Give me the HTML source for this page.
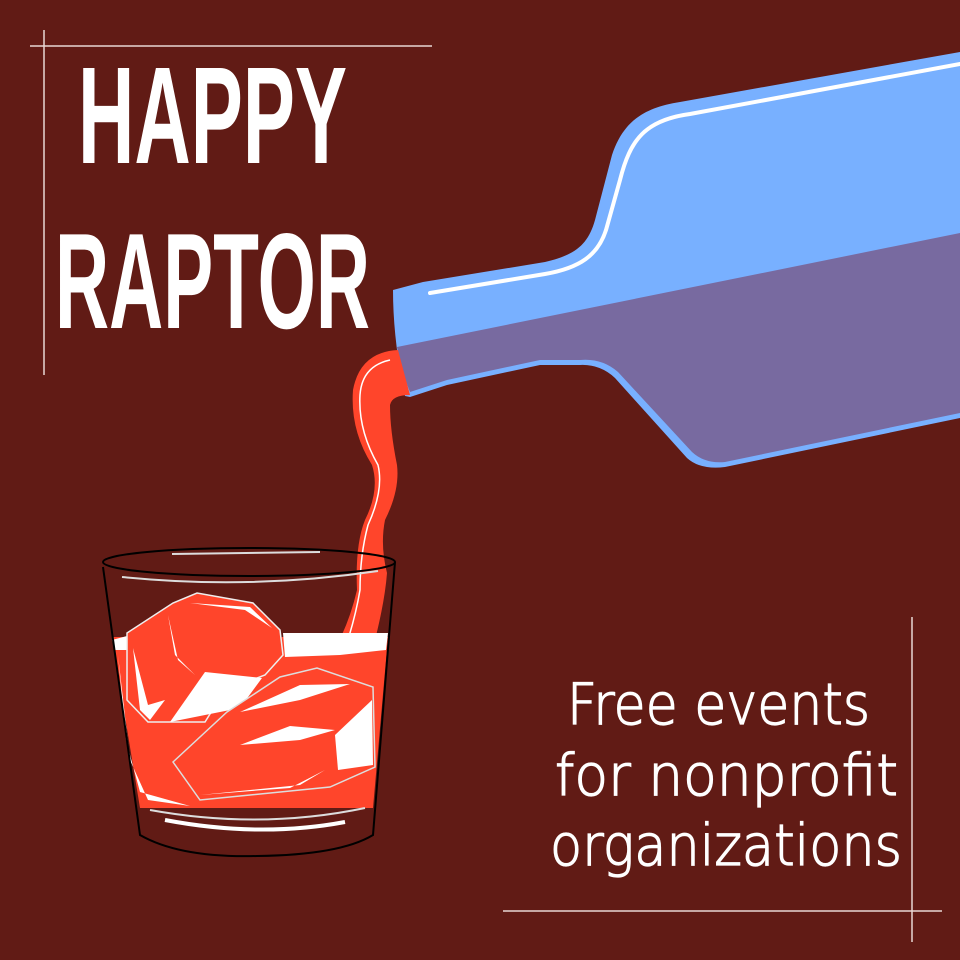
<!DOCTYPE html>
<html><head><meta charset="utf-8"><style>
html,body{margin:0;padding:0;background:#611b15;}
svg{display:block}
</style></head><body>
<svg width="960" height="960" viewBox="0 0 960 960" xmlns="http://www.w3.org/2000/svg">
<rect width="960" height="960" fill="#611b15"/>
<!-- frame lines -->
<line x1="30" y1="46" x2="432" y2="46" stroke="#e8d8d4" stroke-width="1.5"/>
<line x1="44" y1="30" x2="44" y2="375" stroke="#e8d8d4" stroke-width="1.5"/>
<line x1="503" y1="911" x2="942" y2="911" stroke="#e8d8d4" stroke-width="1.5"/>
<line x1="912" y1="617" x2="912" y2="942" stroke="#e8d8d4" stroke-width="1.5"/>
<!-- title -->
<text x="78" y="163" font-family="Liberation Sans, sans-serif" font-weight="bold" font-size="138" fill="#fff" textLength="269" lengthAdjust="spacingAndGlyphs">HAPPY</text>
<text x="55" y="328" font-family="Liberation Sans, sans-serif" font-weight="bold" font-size="136" fill="#fff" textLength="315" lengthAdjust="spacingAndGlyphs">RAPTOR</text>
<!-- subtitle -->
<g font-family="DejaVu Sans, Liberation Sans, sans-serif" font-weight="200" font-size="57" fill="#fff" stroke="#fff" stroke-width="1.3">
<text x="567" y="724" textLength="303" lengthAdjust="spacingAndGlyphs">Free events</text>
<text x="555" y="795" textLength="343" lengthAdjust="spacingAndGlyphs">for nonprofit</text>
<text x="550" y="865" textLength="352" lengthAdjust="spacingAndGlyphs">organizations</text>
</g>
<!-- bottle -->
<path d="M393 290 L423 282 L545 262 C575 255 588 245 595 220 L612 155 C622 125 640 108 680 102 L960 52 L960 418 L725 467 Q700 470 687 458 L615 378 Q600 364 580 365 L540 365 L447 385 L410 397 L405 396 Q393 340 393 290 Z" fill="#78b0ff"/>
<path d="M397 347 L960 233 L960 413 L725 462 Q705 464 692 452 L618 372 Q602 358 580 360 L540 360 L447 380 L410 392 Q401 370 397 347 Z" fill="#786aa0"/>
<path d="M430 293 L545 274 C580 268 598 255 606 230 L620 180 C630 140 645 120 690 114 L960 64" fill="none" stroke="#fff" stroke-width="4" stroke-linecap="round"/>
<!-- stream -->
<path d="M398 350 Q360 352 353 390 Q350 430 372 465 Q380 490 365 520 Q355 545 357 590 Q350 620 337 645 L375 640 Q385 600 387 573 Q380 545 385 520 Q400 490 397 465 Q390 430 390 405 Q392 395 410 395 Z" fill="#ff452b"/>
<path d="M390 360 Q362 366 360 395 Q358 430 378 465 Q384 490 368 525 Q360 555 360 590 Q355 620 343 655" fill="none" stroke="#fff" stroke-width="1.5"/>
<!-- glass liquid -->
<path d="M112 637 L388 637 L373 808 L140 808 Z" fill="#ff452b"/>
<path d="M283 633 L388 633 L386 650 L340 655 L285 657 Z" fill="#fff"/>
<path d="M112 640 L127 636 L127 650 L115 650 Z" fill="#fff"/>
<!-- upper cube -->
<path d="M127 633 L173 603 L197 593 L253 603 L280 630 L283 655 L265 675 L225 690 L205 722 L148 722 L127 700 Z" fill="#ff452b" stroke="#eee" stroke-width="1.5"/>
<path d="M170 722 L205 672 L262 678 L240 708 Z" fill="#fff"/>
<path d="M133 648 L140 710 L150 720 L165 700 L148 705 Z" fill="#fff"/>
<path d="M190 603 L250 607 L272 628 L245 610 Z" fill="#fff"/>
<path d="M168 615 L178 660 L195 675 L175 655 Z" fill="#fff"/>
<!-- lower cube -->
<path d="M173 762 L227 712 L280 677 L317 668 L373 687 L375 767 L330 787 L200 800 Z" fill="#ff452b" stroke="#ddd" stroke-width="1.5"/>
<path d="M335 735 L372 700 L373 765 L338 770 Z" fill="#fff"/>
<path d="M240 745 L290 726 L335 730 L300 740 Z" fill="#fff"/>
<path d="M240 712 L300 685 L350 684 L300 700 Z" fill="#fff"/>
<path d="M200 795 L300 785 L325 770 L290 788 Z" fill="#fff"/>
<path d="M118 655 L130 760 L148 800 L190 806 L140 792 L126 740 Z" fill="#fff"/>
<!-- glass -->
<ellipse cx="249" cy="562" rx="146" ry="14" fill="none" stroke="#000" stroke-width="2"/>
<path d="M103 567 L140 835 Q180 858 257 856 Q340 855 373 835 L395 562" fill="none" stroke="#000" stroke-width="2"/>
<path d="M172 554 L320 552" stroke="#ddd" stroke-width="2"/>
<path d="M122 577 Q250 590 378 571" fill="none" stroke="#ddd" stroke-width="2"/>
<path d="M150 810 Q260 830 365 808" fill="none" stroke="#ddd" stroke-width="2"/>
<path d="M165 820 Q260 838 345 822" fill="none" stroke="#fff" stroke-width="4"/>
</svg>
</body></html>
